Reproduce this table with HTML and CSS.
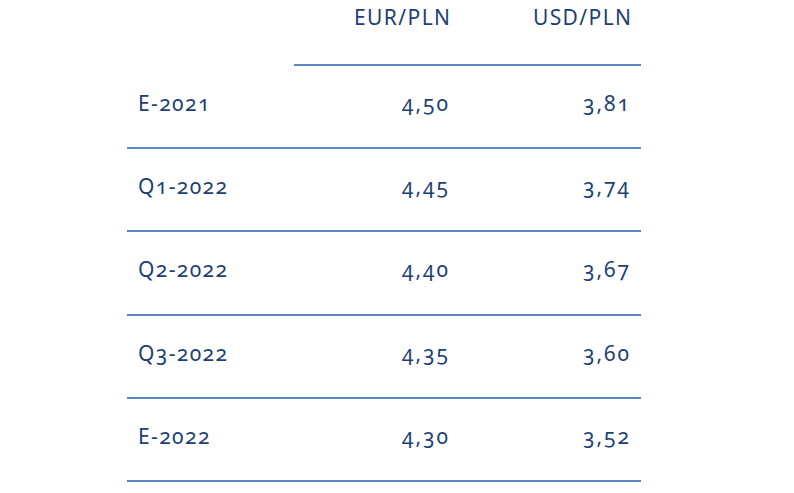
FILE: index.html
```html
<!DOCTYPE html>
<html lang="pl">
<head>
<meta charset="utf-8">
<link rel="stylesheet" href="styles.css">
</head>
<body>
<div class="table">
  <div class="head">
    <div class="cell label"></div>
    <div class="cell num hl">EUR/PLN</div>
    <div class="cell num hl">USD/PLN</div>
  </div>
  <div class="row"><div class="cell label">E-2021</div><div class="cell num">4,50</div><div class="cell num">3,81</div></div>
  <div class="row"><div class="cell label">Q1-2022</div><div class="cell num">4,45</div><div class="cell num">3,74</div></div>
  <div class="row"><div class="cell label">Q2-2022</div><div class="cell num">4,40</div><div class="cell num">3,67</div></div>
  <div class="row"><div class="cell label">Q3-2022</div><div class="cell num">4,35</div><div class="cell num">3,60</div></div>
  <div class="row"><div class="cell label">E-2022</div><div class="cell num">4,30</div><div class="cell num">3,52</div></div>
</div>
</body>
</html>
```
FILE: styles.css
```css
html, body {
  margin: 0;
  padding: 0;
  background: #ffffff;
}
body {
  font-family: "Noto Sans", "DejaVu Sans", sans-serif;
  color: #213f72;
  font-size: 21px;
  font-variant-numeric: oldstyle-nums;
  font-feature-settings: "onum" 1;
  letter-spacing: 1.4px;
}
.table {
  margin-left: 127px;
  width: 514px;
}
.head, .row {
  display: grid;
  grid-template-columns: 167px 166px 181px;
}
.head {
  height: 66px;
}
.head .hl {
  border-bottom: 2px solid #5b88c4;
}
.row {
  height: 81.2px;
  border-bottom: 2px solid #5b88c4;
}
.cell {
  display: flex;
  align-items: center;
  padding-bottom: 7px;
}
.label {
  padding-left: 11px;
}
.num {
  justify-content: flex-end;
  padding-right: 8.6px;
}
.row .num {
  letter-spacing: 2px;
  padding-right: 10px;
}
.head .cell {
  align-items: flex-start;
  padding-top: 3px;
  padding-bottom: 0;
}
```
